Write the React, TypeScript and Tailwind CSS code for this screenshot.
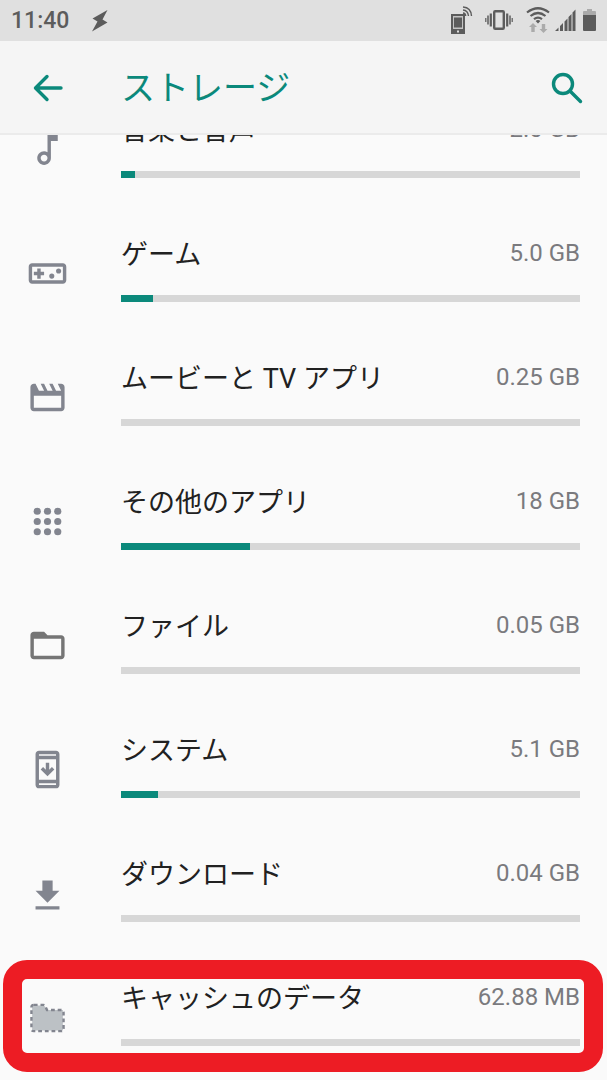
import type { ReactNode } from 'react';

type StorageItem = {
  label: string;
  value: string;
  percent: number;
  icon: ReactNode;
  highlighted?: boolean;
};

function Icon({ children, tone = 'text-[#82858f]' }: { children: ReactNode; tone?: string }) {
  return (
    <svg viewBox="0 0 24 24" fill="currentColor" aria-hidden="true" className={`mt-px size-[41px] shrink-0 ${tone}`}>
      {children}
    </svg>
  );
}

const items: StorageItem[] = [
  {
    label: '音楽と音声',
    value: '2.0 GB',
    percent: 3,
    icon: (
      <Icon>
        <path d="M12 3l.01 10.55c-.59-.34-1.27-.55-2-.55C7.79 13 6 14.79 6 17s1.79 4 4.01 4S14 19.21 14 17V7h4V3h-6zm-1.99 16c-1.1 0-2-.9-2-2s.9-2 2-2 2 .9 2 2-.9 2-2 2z" />
      </Icon>
    ),
  },
  {
    label: 'ゲーム',
    value: '5.0 GB',
    percent: 7,
    icon: (
      <Icon>
        <path d="M21 6H3c-1.1 0-2 .9-2 2v8c0 1.1.9 2 2 2h18c1.1 0 2-.9 2-2V8c0-1.1-.9-2-2-2zm0 10H3V8h18v8zM6 15h2v-2h2v-2H8V9H6v2H4v2h2z" />
        <circle cx="14.5" cy="13.5" r="1.5" />
        <circle cx="18.5" cy="10.5" r="1.5" />
      </Icon>
    ),
  },
  {
    label: 'ムービーと TV アプリ',
    value: '0.25 GB',
    percent: 0,
    icon: (
      <Icon>
        <path d="M18 4l2 4h-3l-2-4h-2l2 4h-3l-2-4H8l2 4H7L5 4H4c-1.1 0-2 .9-2 2v12c0 1.1.9 2 2 2h16c1.1 0 2-.9 2-2V6c0-1.1-.9-2-2-2h-2zm2 14H4v-7h16v7z" />
      </Icon>
    ),
  },
  {
    label: 'その他のアプリ',
    value: '18 GB',
    percent: 28,
    icon: (
      <Icon>
        {[6, 12, 18].map((cy) => [6, 12, 18].map((cx) => <circle key={`${cx}-${cy}`} cx={cx} cy={cy} r="2.1" />))}
      </Icon>
    ),
  },
  {
    label: 'ファイル',
    value: '0.05 GB',
    percent: 0,
    icon: (
      <Icon tone="text-[#757575]">
        <path d="M20 6h-8l-2-2H4c-1.1 0-2 .9-2 2v12c0 1.1.9 2 2 2h16c1.1 0 2-.9 2-2V8c0-1.1-.9-2-2-2zm0 12H4V8h16v10z" />
      </Icon>
    ),
  },
  {
    label: 'システム',
    value: '5.1 GB',
    percent: 8,
    icon: (
      <Icon>
        <path d="M17 1H7c-1.1 0-2 .9-2 2v18c0 1.1.9 2 2 2h10c1.1 0 2-.9 2-2V3c0-1.1-.9-2-2-2zm0 20H7v-1h10v1zm0-3H7V6h10v12zm0-14H7V3h10v1zM12 16l4-4-1.41-1.41L13 12.17V8h-2v4.17l-1.59-1.59L8 12l4 4z" />
      </Icon>
    ),
  },
  {
    label: 'ダウンロード',
    value: '0.04 GB',
    percent: 0,
    icon: (
      <Icon>
        <path d="M19 10.4h-4v-6H9v6H5l7 7 7-7zM5 19.4v2h14v-2H5z" />
      </Icon>
    ),
  },
  {
    label: 'キャッシュのデータ',
    value: '62.88 MB',
    percent: 0,
    highlighted: true,
    icon: (
      <Icon>
        <path d="M3 5h7l2 2.6h9v12H3z" fill="#bcc1c5" />
        <path
          d="M4 4.6h5.500q1 0 1.300 1l.9 2H20q1.400 0 1.400 1.400v9.600q0 1.400-1.400 1.400H4q-1.400 0-1.400-1.400V6q0-1.400 1.400-1.400z"
          fill="none"
          stroke="currentColor"
          strokeWidth="1.4"
          strokeDasharray="2.2 1.7"
        />
      </Icon>
    ),
  },
];

function StatusBar() {
  return (
    <div className="flex h-[41px] items-center justify-between bg-[#e0e0e0] pr-[11px] pl-[11px] text-[#5c5c5c]">
      <div className="flex items-center gap-[22px]">
        <time className="text-[23px] leading-8 font-medium">11:40</time>
        <svg viewBox="0 0 18 22" fill="currentColor" aria-hidden="true" className="h-[22px] w-[18px]">
          <path d="M16.500 0L1.500 8.500l5 3L1 21.500l15.500-9-5-3z" />
        </svg>
      </div>
      <div className="flex items-center pb-[2px]">
        <svg viewBox="0 0 24 30" fill="none" aria-hidden="true" className="h-[30px] w-6">
          <path d="M1 9h14v20H1z" fill="currentColor" />
          <path d="M3 11h10v13H3z" fill="#c4c4c4" />
          <path d="M4 12.5h8v10H4z" fill="currentColor" />
          <path d="M7 25.5h2v2H7z" fill="#e0e0e0" />
          <g stroke="currentColor" strokeWidth="1.4">
            <path d="M13 2q8 .5 8.5 9" />
            <path d="M13 5q5 .5 5.5 6" />
            <path d="M13 8q2.5 .3 2.7 3" />
          </g>
        </svg>
        <svg viewBox="0 0 28 22" fill="none" stroke="currentColor" aria-hidden="true" className="ml-[11px] h-[22px] w-7">
          <rect x="9.2" y="2.2" width="9.6" height="17.6" rx="1" strokeWidth="2.4" />
          <path d="M5.8 4.5v13M22.2 4.500v13" strokeWidth="2.2" />
          <path d="M3 6.5v9M25 6.5v9" strokeWidth="1.5" />
          <path d="M.8 9v4M27.2 9v4" strokeWidth="1.2" />
        </svg>
        <svg viewBox="0 0 24 28" fill="none" aria-hidden="true" className="ml-[13px] h-7 w-6">
          <g stroke="currentColor" strokeWidth="2.2">
            <path d="M1 6.5q11-8.500 22 0" />
            <path d="M4.5 10q7.500-6 15 0" />
            <path d="M8 13.2q4-3.200 8 0" />
          </g>
          <path d="M9.6 15q2.400-2 4.800 0L12 17.5z" fill="currentColor" />
          <path d="M7 17l-4 4h2.300v5h3.400v-5H11zM17.500 27l-4-4h2.300v-5h3.400v5h2.300z" fill="#ababab" />
        </svg>
        <svg viewBox="0 0 21 24" fill="currentColor" aria-hidden="true" className="ml-[5px] h-6 w-[21px]">
          <path d="M0 23l3.500-3.500V23zM5 18l3-3v8H5zM9.500 13.500l3-3V23h-3zM13.500 9l3-3v17h-3zM17.500 4.500l3-3V23h-3z" />
        </svg>
        <svg viewBox="0 0 13 24" aria-hidden="true" className="ml-[7px] h-6 w-[13px]">
          <path d="M4 1h5v2h3q1 0 1 1v4H0V4q0-1 1-1h3z" fill="#ababab" />
          <path d="M0 7h13v15q0 1-1 1H1q-1 0-1-1z" fill="currentColor" />
        </svg>
      </div>
    </div>
  );
}

function AppBar() {
  return (
    <div className="flex h-[94px] items-center border-b-2 border-[#ebebeb] bg-[#f5f5f5] pt-[2px] pr-[24px] pl-[27px] text-[#0b897b]">
      <button type="button" aria-label="戻る" className="mr-[53px] flex size-[41px] items-center justify-center">
        <svg
          viewBox="0 0 30 28"
          fill="none"
          stroke="currentColor"
          strokeWidth="3.4"
          strokeLinecap="round"
          strokeLinejoin="round"
          aria-hidden="true"
          className="h-7 w-[30px]"
        >
          <path d="M14 2.500L2.500 14 14 25.500M3 14h25" />
        </svg>
      </button>
      <h1 className="flex-1 text-[34px] leading-[48px]">ストレージ</h1>
      <button type="button" aria-label="検索" className="flex size-8 items-center justify-center">
        <svg
          viewBox="0 0 32 32"
          fill="none"
          stroke="currentColor"
          strokeWidth="3.4"
          strokeLinecap="round"
          aria-hidden="true"
          className="size-8"
        >
          <circle cx="12" cy="12" r="9.5" />
          <path d="M19 19l10.500 10.500" />
        </svg>
      </button>
    </div>
  );
}

function StorageRow({ label, value, percent, icon, highlighted }: StorageItem) {
  return (
    <li className="relative">
      <button type="button" className="flex w-full items-center px-[27px] text-left">
        {icon}
        <span className="ml-[53px] block flex-1 pt-6 pb-[33px]">
          <span className="flex items-start justify-between">
            <span className="text-[27px] leading-[40px] text-[#212121]">{label}</span>
            <span className="text-2xl leading-[36px] text-[#7a7a7e]">{value}</span>
          </span>
          <span
            role="progressbar"
            aria-label={label}
            aria-valuenow={percent}
            className="mt-5 block h-[7px] bg-[#d7d7d7]"
          >
            <span className="block h-full bg-[#0b897b]" style={{ width: `${percent}%` }} />
          </span>
        </span>
      </button>
      {highlighted && (
        <div className="pointer-events-none absolute top-[5px] right-[4px] bottom-[7px] left-[3px] rounded-3xl border-[19px] border-[#ed1c24]" />
      )}
    </li>
  );
}

export default function App() {
  return (
    <div className="min-h-screen overflow-hidden bg-[#fafafa] font-['Roboto','Noto_Sans_CJK_JP',sans-serif]">
      <header className="relative z-10">
        <StatusBar />
        <AppBar />
      </header>
      <main className="-mt-12">
        <ul>
          {items.map((item) => (
            <StorageRow key={item.label} {...item} />
          ))}
        </ul>
      </main>
    </div>
  );
}
